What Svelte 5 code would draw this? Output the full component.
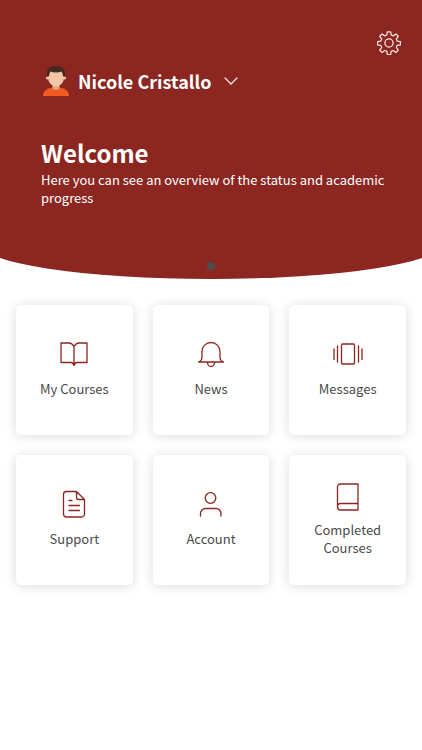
<script>
  const tiles = [
    { label: 'My Courses', icon: 'open-book' },
    { label: 'News', icon: 'bell' },
    { label: 'Messages', icon: 'carousel' },
    { label: 'Support', icon: 'document' },
    { label: 'Account', icon: 'person' },
    { label: 'Completed Courses', icon: 'book' }
  ];
</script>

<div class="page">
  <header>
    <div class="bar">
      <button class="settings" aria-label="Settings">
        <svg width="24" height="24" viewBox="0.700 0.700 24.600 24.600">
          <path d="M11.300 1.500h3.400l.5 3.300 2.200.9 2.700-2 2.400 2.400-2 2.700.9 2.200 3.300.5v3.400l-3.300.5-.9 2.200 2 2.700-2.400 2.400-2.700-2-2.200.9-.5 3.300h-3.400l-.5-3.300-2.200-.9-2.700 2-2.400-2.400 2-2.700-.9-2.200-3.300-.5v-3.400l3.300-.5.9-2.200-2-2.700 2.400-2.400 2.700 2 2.200-.9z" />
          <circle cx="13" cy="13" r="4.200" />
        </svg>
      </button>
    </div>
    <button class="profile">
      <svg class="avatar" width="28" height="32" viewBox="0 0 28 32">
        <path d="M1 31C1 25 6 22.500 14 22.500S27 25 27 31z" fill="#f15a24" />
        <path d="M10.500 18h7v5c-1.500 2.500-5.500 2.500-7 0z" fill="#dba987" />
        <ellipse cx="14" cy="12.500" rx="8" ry="9" fill="#f3c6a5" />
        <circle cx="5.500" cy="13" r="1.600" fill="#f3c6a5" />
        <circle cx="22.500" cy="13" r="1.600" fill="#f3c6a5" />
        <path d="M5.500 12C3.500 5 7 1 14 1s10.500 4 8.500 11l-1.500-1-1-4.500c-4 1.300-8 1.300-12 0L7 11z" fill="#43291f" />
      </svg>
      <span>Nicole Cristallo</span>
      <svg class="chevron" width="14" height="8" viewBox="0 0 14 8"><path d="M1 1l6 6 6-6" /></svg>
    </button>
    <h1>Welcome</h1>
    <p>Here you can see an overview of the status and academic progress</p>
    <span class="dot"></span>
  </header>

  <nav>
    {#each tiles as tile}
      <a href="#{tile.icon}">
        <svg width="32" height="30" viewBox="0 0 32 30">
          {#if tile.icon === 'open-book'}
            <path d="M16 6.500Q14 3 11 3H3V22.500H13Q15 22.500 16 25.500Q17 22.500 19 22.500H29V3H21Q18 3 16 6.500zV25.500" />
          {:else if tile.icon === 'bell'}
            <path d="M3.500 22H28.500M4 22Q7 20.500 7 17V11.500a9 9 0 0 1 18 0V17Q25 20.500 28 22M12.500 22.500a3.500 4 0 0 0 7 0" />
          {:else if tile.icon === 'carousel'}
            <path d="M2 9V19.500M5.500 6V22M26.500 6V22M30 9V19.500" />
            <rect x="9.500" y="4" width="13" height="20" rx="1" />
          {:else if tile.icon === 'document'}
            <path d="M18.500 1.500H8.500a3 3 0 0 0-3 3V24a3 3 0 0 0 3 3H23.500a3 3 0 0 0 3-3V9.500zV7.500a2 2 0 0 0 2 2H26.500M11 10.500H14M11 15.500H21.500M11 20.500H21.500" />
          {:else if tile.icon === 'person'}
            <circle cx="15.500" cy="8" r="5.300" />
            <path d="M5.500 26V23.500a5 5 0 0 1 5-5H21a5 5 0 0 1 5 5V26" />
          {:else}
            <path d="M26 3H8.500a3 3 0 0 0-3 3V26a3 3 0 0 0 3 3H26zM26 22.500H8.500a3 3 0 0 0-3 3" />
          {/if}
        </svg>
        <span>{tile.label}</span>
      </a>
    {/each}
  </nav>
</div>

<style>
  :global(body) {
    margin: 0;
    background: #fff;
  }
  .page {
    font-family: 'Noto Sans CJK SC', 'Noto Sans', sans-serif;
    color: #4a4a4a;
  }
  header {
    position: relative;
    overflow: hidden;
    box-sizing: border-box;
    min-height: 279px;
    padding: 31px 21px 9px 41px;
    display: flex;
    flex-direction: column;
    align-items: flex-start;
    color: #fff;
  }
  header::before {
    content: '';
    position: absolute;
    z-index: -1;
    inset: 0 -5%;
    background: #8c2620;
    border-radius: 0 0 50% 50% / 0 0 36px 36px;
  }
  .bar {
    align-self: stretch;
    display: flex;
    justify-content: flex-end;
  }
  button {
    border: 0;
    padding: 0;
    background: none;
    color: inherit;
    font: inherit;
    cursor: pointer;
  }
  .settings {
    height: 24px;
  }
  .settings svg {
    display: block;
  }
  .settings svg,
  .chevron {
    fill: none;
    stroke: #ffe4df;
    stroke-width: 1.3;
    stroke-linejoin: round;
    stroke-linecap: round;
  }
  .profile {
    display: flex;
    align-items: center;
    margin-top: 10px;
    font-size: 18px;
    font-weight: 700;
    line-height: 32px;
  }
  .avatar {
    margin: 0 8px 0 1px;
  }
  .chevron {
    margin-left: 13px;
  }
  h1 {
    margin: 38px 0 0;
    font-size: 24px;
    font-weight: 700;
    line-height: 36px;
  }
  p {
    margin: 0;
    font-size: 13px;
    line-height: 18px;
  }
  .dot {
    align-self: center;
    width: 8px;
    height: 8px;
    margin: auto 20px 0 0;
    border-radius: 50%;
    background: #4d4d4d;
  }
  nav {
    display: grid;
    grid-template-columns: repeat(3, 1fr);
    grid-auto-rows: 130px;
    gap: 20px;
    padding: 26px 16px;
  }
  a {
    box-sizing: border-box;
    display: flex;
    flex-direction: column;
    align-items: center;
    justify-content: center;
    gap: 10px;
    padding-bottom: 2px;
    border-radius: 5px;
    background: #fff;
    box-shadow: 0 1px 12px rgba(0, 0, 0, 0.15);
    color: inherit;
    text-align: center;
    text-decoration: none;
    font-size: 13px;
    line-height: 18px;
  }
  a span {
    max-width: 90px;
  }
  a svg {
    fill: none;
    stroke: #8c2620;
    stroke-width: 1.3;
    stroke-linejoin: round;
    stroke-linecap: round;
  }
</style>
